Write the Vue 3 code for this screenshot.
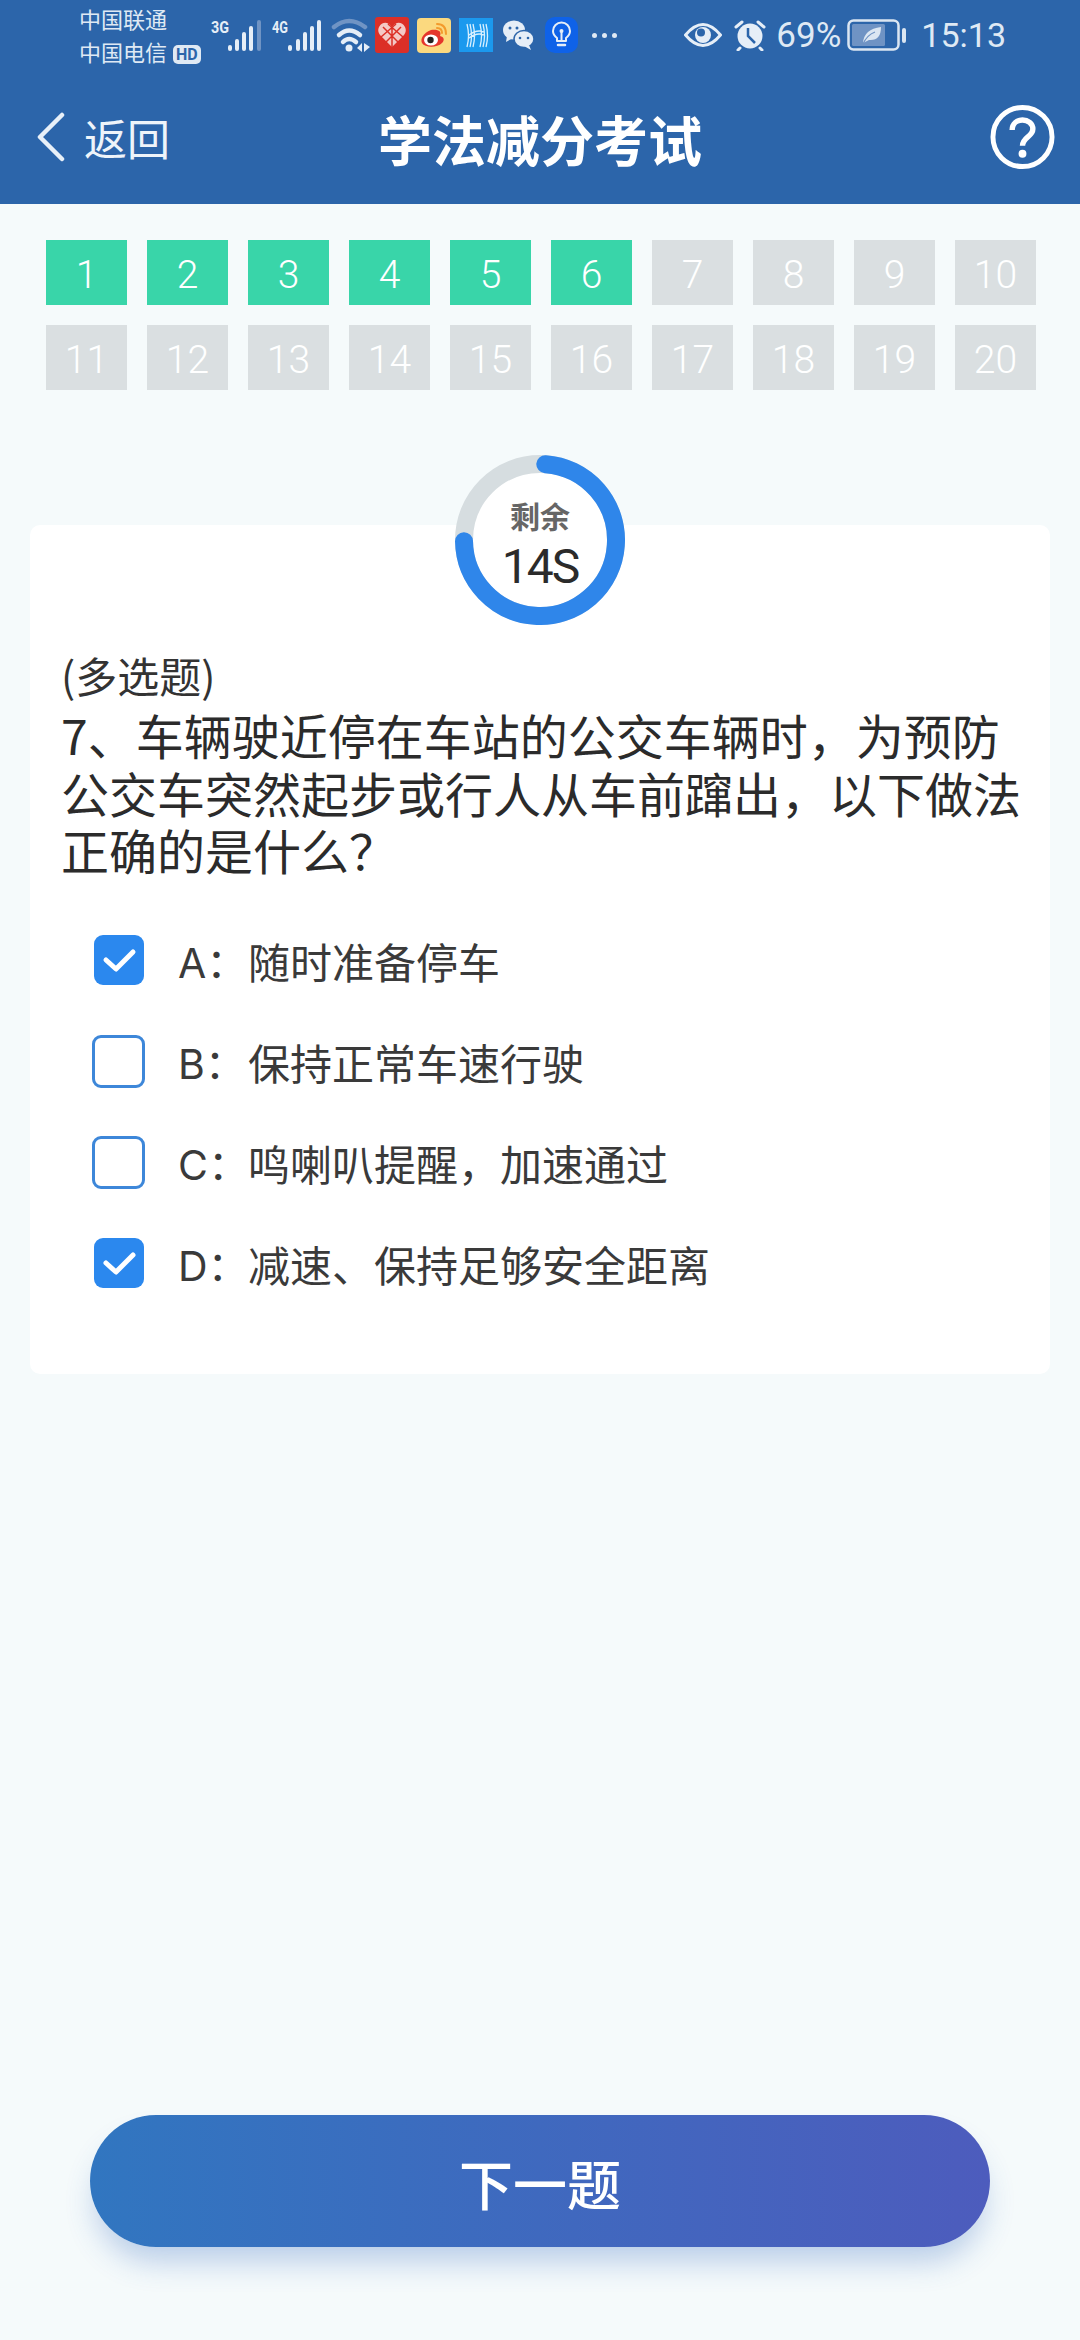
<template>
  <div class="page">
    <!-- header -->
    <div class="header">
      <div class="status-bar">
        <div class="carriers">
          <div>中国联通</div>
          <div class="carrier-2">中国电信<span class="hd">HD</span></div>
        </div>
        <svg class="net" width="52" height="40" viewBox="0 0 52 40">
          <text x="0" y="18" class="net-label" textLength="18" lengthAdjust="spacingAndGlyphs">3G</text>
          <rect x="17" y="30" width="4" height="6" rx="2" fill="#e6eef7" />
          <rect x="24" y="24" width="4" height="12" rx="2" fill="#e6eef7" />
          <rect x="31" y="17" width="4" height="19" rx="2" fill="#e6eef7" />
          <rect x="38" y="11" width="4" height="25" rx="2" fill="#e6eef7" />
          <rect x="46" y="5" width="4" height="31" rx="2" fill="#7094c4" />
        </svg>
        <svg class="net net-4g" width="52" height="40" viewBox="0 0 52 40">
          <text x="0" y="18" class="net-label" textLength="16" lengthAdjust="spacingAndGlyphs">4G</text>
          <rect x="16" y="30" width="4" height="6" rx="2" fill="#e6eef7" />
          <rect x="24" y="24" width="4" height="12" rx="2" fill="#e6eef7" />
          <rect x="31" y="17" width="4" height="19" rx="2" fill="#e6eef7" />
          <rect x="38" y="11" width="4" height="25" rx="2" fill="#e6eef7" />
          <rect x="45" y="5" width="4" height="31" rx="2" fill="#e6eef7" />
        </svg>
        <svg class="wifi" width="40" height="40" viewBox="0 0 40 40">
          <path d="M3 12 Q18 0 34 12" fill="none" stroke="#7094c4" stroke-width="4.500" stroke-linecap="round" />
          <path d="M8 20 Q18 11 29 20" fill="none" stroke="#e6eef7" stroke-width="4.500" stroke-linecap="round" />
          <path d="M12 27 Q18 21 25 27" fill="none" stroke="#e6eef7" stroke-width="4.500" stroke-linecap="round" />
          <circle cx="18" cy="33" r="3.500" fill="#e6eef7" />
          <path d="M26 33 L31 28 V37 Z M33 28 V37 L39 32 Z" fill="#e6eef7" />
        </svg>
        <svg class="app app-heart" width="34" height="36" viewBox="0 0 34 36">
          <rect width="34" height="36" rx="3" fill="#dc2f27" />
          <path d="M17 30 L5 18 Q2 14 4 10 Q7 5 12 6 Q15 7 17 10 Q19 7 22 6 Q27 5 30 10 Q32 14 29 18 Z" fill="#f4c9c6" />
          <path d="M8 10 L26 28 M26 10 L8 28 M13 7 L28 20 M21 7 L6 20 M17 10 V30" stroke="#dc2f27" stroke-width="1.500" />
        </svg>
        <svg class="app app-weibo" width="34" height="35" viewBox="0 0 34 35">
          <rect width="34" height="35" rx="4" fill="#fbd97f" />
          <path d="M14 12 C6 15 3 21 5 25 C8 30 20 30 25 25 C28 22 27 19 23 18 C25 13 21 11 14 12 Z" fill="#e5362c" />
          <ellipse cx="14" cy="22" rx="7" ry="5.500" fill="#fff" />
          <circle cx="13.500" cy="22" r="3.200" fill="#222" />
          <path d="M20 6 Q29 6 29 16 M20 10 Q25 10 25 15" fill="none" stroke="#f39a2c" stroke-width="2" stroke-linecap="round" />
        </svg>
        <svg class="app app-h" width="34" height="34" viewBox="0 0 34 34">
          <rect width="34" height="34" fill="#1b99ee" />
          <path d="M8 29 Q11 18 8 6 M11 29 Q14 18 11 6 M14 29 Q17 18 14 6 M21 29 Q24 18 21 6 M24 29 Q27 18 24 6 M27 29 Q30 18 27 6 M10 20 Q18 14 25 17 M10 17 Q18 11 25 14" fill="none" stroke="#d8f0ff" stroke-width="1.300" />
        </svg>
        <svg class="app app-wechat" width="33" height="32" viewBox="0 0 33 32">
          <ellipse cx="12" cy="11" rx="11" ry="9.500" fill="#e6eef7" />
          <path d="M5 17 L4 23 L11 19 Z" fill="#e6eef7" />
          <ellipse cx="22" cy="20" rx="10" ry="8.500" fill="#e6eef7" stroke="#2c65aa" stroke-width="1.500" />
          <path d="M27 26 L29 31 L22 27 Z" fill="#e6eef7" />
          <circle cx="8" cy="9" r="1.500" fill="#2c65aa" />
          <circle cx="15" cy="9" r="1.500" fill="#2c65aa" />
          <circle cx="18" cy="19" r="1.300" fill="#2c65aa" />
          <circle cx="26" cy="19" r="1.300" fill="#2c65aa" />
        </svg>
        <svg class="app app-bulb" width="33" height="36" viewBox="0 0 33 36">
          <rect width="33" height="36" rx="10" fill="#0f62e8" />
          <path d="M12 24 V21 C8 18 8 15 8 14 A8.500 8.500 0 0 1 25 14 C25 15 25 18 21 21 V24 Z" fill="none" stroke="#e6eef7" stroke-width="2" stroke-linejoin="round" />
          <path d="M16.500 23 V15" stroke="#e6eef7" stroke-width="2" />
          <circle cx="16.500" cy="14" r="2" fill="#e6eef7" />
          <path d="M13 28 H20" stroke="#e6eef7" stroke-width="2.500" stroke-linecap="round" />
        </svg>
        <div class="dots"><i></i><i></i><i></i></div>

        <div class="status-right">
          <svg width="38" height="26" viewBox="0 0 38 26">
            <path d="M1.500 13 Q19 -8 36.500 13 Q19 34 1.500 13 Z" fill="none" stroke="#e6eef7" stroke-width="3" />
            <circle cx="19" cy="13" r="8" fill="#e6eef7" />
            <circle cx="17" cy="10.500" r="4" fill="#2c65aa" />
          </svg>
          <svg class="alarm" width="32" height="32" viewBox="0 0 32 32">
            <circle cx="16" cy="17" r="12.500" fill="#e6eef7" />
            <path d="M2 8 L8 3 M30 8 L24 3 M6 29 L4 31 M26 29 L28 31" stroke="#e6eef7" stroke-width="3" stroke-linecap="round" />
            <path d="M14 9 V17 L21 24" fill="none" stroke="#2c65aa" stroke-width="2.500" />
          </svg>
          <span class="pct">69%</span>
          <svg class="batt" width="60" height="32" viewBox="0 0 60 32">
            <rect x="1.500" y="1.500" width="50" height="29" rx="5" fill="none" stroke="#dbe6f2" stroke-width="2.500" />
            <rect x="5" y="5" width="33" height="22" rx="1.500" fill="#6f93c4" />
            <path d="M16 24 Q17 10 34 8 Q34 22 22 21 Z" fill="#dbe6f2" />
            <path d="M16 25 Q20 16 28 13" fill="none" stroke="#6f93c4" stroke-width="1.200" />
            <rect x="55" y="9" width="4" height="15" rx="2" fill="#dbe6f2" />
          </svg>
          <span class="time">15:13</span>
        </div>
      </div>

      <div class="nav">
        <div class="back">
          <svg width="30" height="50" viewBox="0 0 30 50">
            <path d="M26 3 L4 25 L26 47" fill="none" stroke="#e8f0f8" stroke-width="4.500" stroke-linecap="round" stroke-linejoin="round" />
          </svg>
          <span>返回</span>
        </div>
        <div class="title">学法减分考试</div>
        <svg class="help" width="65" height="66" viewBox="0 0 66 66">
          <circle cx="33" cy="33" r="30" fill="none" stroke="#fff" stroke-width="5" />
          <path d="M22.500 26 C22.500 12 43.500 13 43.500 25 C43.500 33 33 33 33 42" fill="none" stroke="#fff" stroke-width="5.500" />
          <circle cx="33" cy="50" r="4" fill="#fff" />
        </svg>
      </div>
    </div>

    <!-- question numbers -->
    <div class="num-grid">
      <div
        v-for="n in 20"
        :key="n"
        class="num"
        :class="{ done: n <= answered }"
      >{{ n }}</div>
    </div>

    <!-- countdown -->
    <div class="timer">
      <svg class="ring" width="170" height="170" viewBox="0 0 170 170">
        <circle cx="85" cy="85" r="76" fill="#fff" stroke="#d6dde0" stroke-width="18" />
        <circle
          cx="85"
          cy="85"
          r="76"
          fill="none"
          stroke="#2f86ea"
          stroke-width="18"
          stroke-linecap="round"
          transform="rotate(-86 85 85)"
          :stroke-dasharray="ringDash"
        />
      </svg>
      <div class="timer-label">剩余</div>
      <div class="timer-value">14S</div>
    </div>

    <!-- question card -->
    <div class="card">
      <div class="q-type">(多选题)</div>
      <div class="q-text">7、车辆驶近停在车站的公交车辆时，为预防公交车突然起步或行人从车前蹿出，以下做法正确的是什么？</div>
      <div class="options">
        <div v-for="opt in options" :key="opt.key" class="option">
          <div class="check-wrap">
            <div v-if="opt.checked" class="check on">
              <svg width="50" height="50" viewBox="0 0 50 50">
                <path d="M12 25 L22 34 L39 17" fill="none" stroke="#fff" stroke-width="5" stroke-linecap="round" stroke-linejoin="round" />
              </svg>
            </div>
            <div v-else class="check"></div>
          </div>
          <span class="opt-key">{{ opt.key }}：</span>
          <span class="opt-text">{{ opt.text }}</span>
        </div>
      </div>
    </div>

    <div class="next-btn">下一题</div>
  </div>
</template>

<script setup>
const answered = 6

const options = [
  { key: 'A', text: '随时准备停车', checked: true },
  { key: 'B', text: '保持正常车速行驶', checked: false },
  { key: 'C', text: '鸣喇叭提醒，加速通过', checked: false },
  { key: 'D', text: '减速、保持足够安全距离', checked: true }
]

// 进度环
const circumference = 2 * Math.PI * 76
const ringDash = `${circumference * 0.735} ${circumference}`
</script>

<style>
html,
body {
  margin: 0;
  background: #f5fafb;
}
</style>

<style scoped>
.page {
  width: 1080px;
  height: 2340px;
  display: flex;
  flex-direction: column;
  background: #f5fafb;
  font-family: "Noto Sans CJK SC", "Noto Sans", sans-serif;
  color: #333;
  overflow: hidden;
}

.header {
  height: 204px;
  background: #2c65aa;
  flex-shrink: 0;
}

.status-bar {
  height: 70px;
  display: flex;
  align-items: center;
  padding: 0 74px 0 79px;
}

.carriers {
  width: 132px;
  flex-shrink: 0;
  font-size: 22px;
  line-height: 33px;
  color: #dfe9f4;
  white-space: nowrap;
}

.hd {
  display: inline-block;
  margin-left: 6px;
  padding: 0 3px;
  height: 19px;
  line-height: 19px;
  border-radius: 5px;
  background: #dfe9f4;
  color: #2c65aa;
  font-family: "Roboto", sans-serif;
  font-size: 16px;
  font-weight: 700;
  vertical-align: 1px;
}

.net-label {
  font-family: "Roboto", sans-serif;
  font-size: 17px;
  font-weight: 700;
  fill: #e6eef7;
}

.net-4g {
  margin-left: 9px;
}

.wifi {
  margin-left: 7px;
}

.app {
  flex-shrink: 0;
}

.app-heart {
  margin-left: 4px;
}

.app-weibo {
  margin-left: 8px;
}

.app-h {
  margin-left: 8px;
}

.app-wechat {
  margin-left: 9px;
}

.app-bulb {
  margin-left: 10px;
}

.dots {
  display: flex;
  gap: 5px;
  margin-left: 14px;
}

.dots i {
  width: 5px;
  height: 5px;
  border-radius: 50%;
  background: #dfe9f4;
}

.status-right {
  margin-left: auto;
  display: flex;
  align-items: center;
  color: #dfe9f4;
}

.alarm {
  margin-left: 12px;
}

.pct {
  margin-left: 10px;
  font-family: "Roboto", sans-serif;
  font-size: 35px;
}

.batt {
  margin-left: 6px;
}

.time {
  margin-left: 14px;
  font-family: "Roboto", sans-serif;
  font-size: 34px;
}

.nav {
  height: 134px;
  display: flex;
  align-items: center;
  justify-content: space-between;
  padding: 0 25px 0 36px;
  position: relative;
  color: #fff;
}

.back {
  display: flex;
  align-items: center;
  gap: 18px;
  font-size: 43px;
  color: #eef4fa;
}

.title {
  position: absolute;
  left: 0;
  right: 0;
  top: 30px;
  text-align: center;
  font-size: 54px;
  font-weight: 700;
  line-height: 78px;
}

.num-grid {
  display: grid;
  grid-template-columns: repeat(10, 81px);
  column-gap: 20px;
  row-gap: 20px;
  margin: 36px 0 0 46px;
}

.num {
  height: 65px;
  background: #dadfe1;
  color: #fff;
  font-family: "Roboto", sans-serif;
  font-size: 39px;
  font-weight: 300;
  line-height: 71px;
  text-align: center;
}

.num.done {
  background: #39d5a9;
}

.timer {
  position: relative;
  z-index: 1;
  width: 170px;
  height: 170px;
  margin: 65px auto 0;
  display: flex;
  flex-direction: column;
  align-items: center;
  flex-shrink: 0;
}

.ring {
  position: absolute;
  left: 0;
  top: 0;
}

.timer-label {
  position: relative;
  margin-top: 40px;
  font-size: 30px;
  line-height: 40px;
  font-weight: 700;
  color: #666;
}

.timer-value {
  position: relative;
  margin-top: 5px;
  font-family: "Roboto", sans-serif;
  font-size: 48px;
  line-height: 54px;
  letter-spacing: -2px;
  color: #2b2b2b;
}

.card {
  margin: -100px 30px 0;
  padding: 118px 15px 60px 31px;
  background: #fff;
  border-radius: 10px;
  flex-shrink: 0;
}

.q-type {
  font-size: 42px;
  line-height: 63px;
  color: #333;
}

.q-text {
  font-size: 48px;
  line-height: 57.500px;
  color: #2b2b2b;
}

.options {
  margin: 31px 0 0 31px;
}

.option {
  height: 101px;
  display: flex;
  align-items: center;
}

.check-wrap {
  width: 53px;
  height: 53px;
  display: flex;
  align-items: center;
  justify-content: center;
  flex-shrink: 0;
}

.check {
  width: 53px;
  height: 53px;
  box-sizing: border-box;
  border: 3px solid #3d87d9;
  border-radius: 9px;
  background: #fff;
}

.check.on {
  width: 50px;
  height: 50px;
  border: none;
  background: #2b88ee;
}

.check svg {
  display: block;
}

.opt-key {
  width: 70px;
  margin-left: 33px;
  flex-shrink: 0;
  font-family: "Inter", "Noto Sans CJK SC", sans-serif;
  font-size: 41px;
  color: #3a3a3a;
  white-space: nowrap;
}

.opt-text {
  font-size: 42px;
  color: #3a3a3a;
  white-space: nowrap;
}

.next-btn {
  margin: auto 90px 93px;
  height: 132px;
  border-radius: 66px;
  background: linear-gradient(90deg, #3176c0, #4d5cbd);
  box-shadow: 0 20px 30px -6px rgba(44, 101, 190, 0.3);
  color: #fff;
  font-size: 54px;
  font-weight: 500;
  line-height: 136px;
  text-align: center;
  flex-shrink: 0;
}
</style>
